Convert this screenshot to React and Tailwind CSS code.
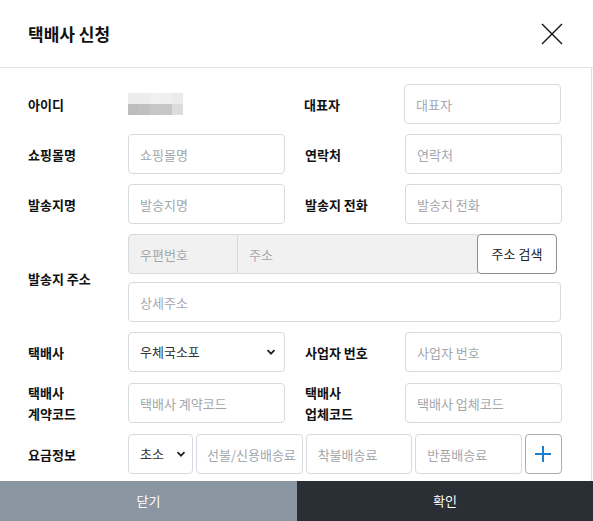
import { useState } from "react";

const font = { fontFamily: '"Noto Sans CJK KR", "Noto Sans", sans-serif' };

const baseCls =
  "h-[40px] border border-[#d6dae1] rounded-[4px] px-[11px] text-[13px] text-[#333] placeholder:text-[#a3a7ad] outline-none";
const inputCls = baseCls + " bg-white";

function Chevron({ right = "right-[9px]" }) {
  return (
    <svg width="10" height="10" viewBox="0 0 10 10" className={"pointer-events-none absolute top-1/2 -translate-y-1/2 " + right}>
      <path d="M1.5 3.2 L5 6.7 L8.5 3.2" fill="none" stroke="#222" strokeWidth="1.8" />
    </svg>
  );
}

function Label({ children }) {
  return (
    <div className="w-[100px] shrink-0 text-[13px] font-bold text-[#111] leading-[21px]">
      {children}
    </div>
  );
}

function Mosaic() {
  const top = ["#ececec", "#ededed", "#f1f1f1", "#efefef", "#ebebeb"];
  const bottom = ["#bdbdbd", "#c0c0c0", "#c6c6c6", "#c7c7c7", "#dcdcdc"];
  return (
    <div className="flex flex-col">
      <div className="flex">
        {top.map((c, i) => (
          <div key={i} className="w-[11px] h-[11px]" style={{ background: c }} />
        ))}
      </div>
      <div className="flex">
        {bottom.map((c, i) => (
          <div key={i} className="w-[11px] h-[11px]" style={{ background: c }} />
        ))}
      </div>
    </div>
  );
}

export default function App() {
  const [courier, setCourier] = useState("우체국소포");
  const [size, setSize] = useState("초소");

  return (
    <div className="w-[593px] h-[521px] bg-white flex flex-col overflow-hidden" style={font}>
      <div className="h-[68px] shrink-0 flex items-center justify-between pl-[28px] pr-[30px] border-b border-[#dfe3e8]">
        <h2 className="text-[17px] font-bold text-[#111]">택배사 신청</h2>
        <button className="w-[22px] h-[22px] flex items-center justify-center">
          <svg width="22" height="22" viewBox="0 0 22 22">
            <path d="M1 1 L21 21 M21 1 L1 21" stroke="#111" strokeWidth="1.4" />
          </svg>
        </button>
      </div>

      <div className="flex-1 border-r border-[#dcdfe3] mr-[1px] pl-[28px] pr-[30px] pt-[16px] flex flex-col gap-[10px]">
        <div className="flex gap-[20px]">
          <div className="flex items-center w-[257px]">
            <Label>아이디</Label>
            <div className="h-[40px] flex items-center">
              <Mosaic />
            </div>
          </div>
          <div className="flex items-center w-[257px]">
            <Label>대표자</Label>
            <input className={inputCls + " w-[157px]"} placeholder="대표자" />
          </div>
        </div>

        <div className="flex gap-[20px]">
          <div className="flex items-center w-[257px]">
            <Label>쇼핑몰명</Label>
            <input className={inputCls + " w-[157px]"} placeholder="쇼핑몰명" />
          </div>
          <div className="flex items-center w-[257px]">
            <Label>연락처</Label>
            <input className={inputCls + " w-[157px]"} placeholder="연락처" />
          </div>
        </div>

        <div className="flex gap-[20px]">
          <div className="flex items-center w-[257px]">
            <Label>발송지명</Label>
            <input className={inputCls + " w-[157px]"} placeholder="발송지명" />
          </div>
          <div className="flex items-center w-[257px]">
            <Label>발송지 전화</Label>
            <input className={inputCls + " w-[157px]"} placeholder="발송지 전화" />
          </div>
        </div>

        <div className="flex items-center">
          <Label>발송지 주소</Label>
          <div className="flex flex-col gap-[8px] w-[434px]">
            <div className="flex">
              <input
                disabled
                className={baseCls + " w-[110px] bg-[#f1f1f1] rounded-r-none"}
                placeholder="우편번호"
              />
              <input
                disabled
                className={baseCls + " flex-1 min-w-0 bg-[#f1f1f1] rounded-none border-l-0"}
                placeholder="주소"
              />
              <button className="h-[40px] w-[80px] border border-[#8f8f8f] rounded-[4px] bg-white text-[13px] text-[#222] -ml-px">
                주소 검색
              </button>
              <div className="w-[4px]" />
            </div>
            <input className={inputCls + " w-full"} placeholder="상세주소" />
          </div>
        </div>

        <div className="flex gap-[20px]">
          <div className="flex items-center w-[257px]">
            <Label>택배사</Label>
            <div className="relative w-[157px]">
              <select
                value={courier}
                onChange={(e) => setCourier(e.target.value)}
                className={inputCls + " w-full appearance-none text-[#222]"}
              >
                <option>우체국소포</option>
                <option>CJ대한통운</option>
                <option>한진택배</option>
              </select>
              <Chevron />
            </div>
          </div>
          <div className="flex items-center w-[257px]">
            <Label>사업자 번호</Label>
            <input className={inputCls + " w-[157px]"} placeholder="사업자 번호" />
          </div>
        </div>

        <div className="flex gap-[20px]">
          <div className="flex items-center w-[257px]">
            <Label>
              택배사
              <br />
              계약코드
            </Label>
            <input className={inputCls + " w-[157px]"} placeholder="택배사 계약코드" />
          </div>
          <div className="flex items-center w-[257px]">
            <Label>
              택배사
              <br />
              업체코드
            </Label>
            <input className={inputCls + " w-[157px]"} placeholder="택배사 업체코드" />
          </div>
        </div>

        <div className="flex items-center">
          <Label>요금정보</Label>
          <div className="flex gap-[3px] w-[434px]">
            <div className="relative w-[65px] shrink-0">
              <select
                value={size}
                onChange={(e) => setSize(e.target.value)}
                className={inputCls + " w-full appearance-none text-[#222] px-[10px]"}
              >
                <option>초소</option>
                <option>소</option>
                <option>중</option>
                <option>대</option>
              </select>
              <Chevron right="right-[7px]" />
            </div>
            <input className={inputCls + " w-[107px] min-w-0 pl-[10px] pr-[2px]"} placeholder="선불/신용배송료" />
            <input className={inputCls + " w-[107px] min-w-0"} placeholder="착불배송료" />
            <input className={inputCls + " w-[107px] min-w-0"} placeholder="반품배송료" />
            <button className="h-[40px] w-[37px] shrink-0 border border-[#a9adb3] rounded-[4px] bg-white flex items-center justify-center">
              <svg width="18" height="18" viewBox="0 0 18 18">
                <path d="M9 1 V17 M1 9 H17" stroke="#1a7fd0" strokeWidth="2" />
              </svg>
            </button>
          </div>
        </div>
      </div>

      <div className="h-[40px] shrink-0 flex">
        <button className="w-[297px] bg-[#8a95a2] text-white text-[13px]">닫기</button>
        <button className="flex-1 bg-[#2a2e35] text-white text-[13px]">확인</button>
      </div>
    </div>
  );
}
